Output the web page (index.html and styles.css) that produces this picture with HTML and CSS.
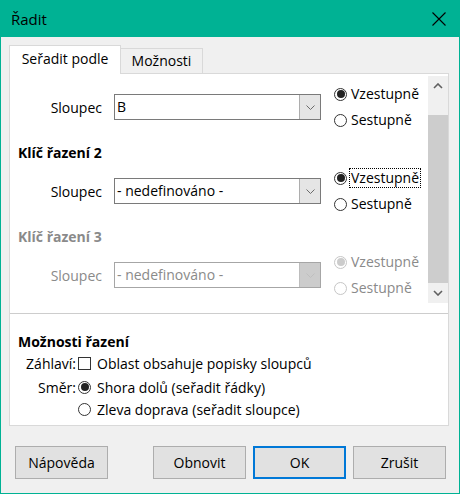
FILE: index.html
```html
<!DOCTYPE html>
<html lang="cs">
<head>
<meta charset="utf-8">
<title>Řadit</title>
<link rel="stylesheet" href="styles.css">
</head>
<body>
<div class="window">
  <div class="titlebar">
    <span class="title">Řadit</span>
    <svg class="close" width="14" height="14" viewBox="0 0 14 14"><path d="M0.5 0.5 L13.5 13.5 M13.5 0.5 L0.5 13.5" stroke="#000" stroke-width="1.1" fill="none"/></svg>
  </div>
  <div class="body">
    <div class="tabs">
      <div class="tab active">Seřadit podle</div>
      <div class="tab">Možnosti</div>
    </div>
    <div class="panel">
      <div class="scrollwin">
        <div class="keys">
          <div class="row">
            <span class="label">Sloupec</span>
            <div class="combo"><span class="val">B</span><span class="dd"><svg width="9" height="5" viewBox="0 0 9 5"><path d="M0.5 0.5 L4.5 4.5 L8.5 0.5" stroke="#6b6b6b" fill="none"/></svg></span></div>
            <div class="radios">
              <div class="radio"><span class="rb on"></span><span class="rt">Vzestupně</span></div>
              <div class="radio"><span class="rb"></span><span class="rt">Sestupně</span></div>
            </div>
          </div>
          <div class="keyhead">Klíč řazení 2</div>
          <div class="row">
            <span class="label">Sloupec</span>
            <div class="combo"><span class="val">- nedefinováno -</span><span class="dd"><svg width="9" height="5" viewBox="0 0 9 5"><path d="M0.5 0.5 L4.5 4.5 L8.5 0.5" stroke="#6b6b6b" fill="none"/></svg></span></div>
            <div class="radios">
              <div class="radio"><span class="rb on"></span><span class="rt focus">Vzestupně</span></div>
              <div class="radio"><span class="rb"></span><span class="rt">Sestupně</span></div>
            </div>
          </div>
          <div class="keyhead disabled">Klíč řazení 3</div>
          <div class="row disabled">
            <span class="label">Sloupec</span>
            <div class="combo"><span class="val">- nedefinováno -</span><span class="dd"><svg width="9" height="5" viewBox="0 0 9 5"><path d="M0.5 0.5 L4.5 4.5 L8.5 0.5" stroke="#bfbfbf" fill="none"/></svg></span></div>
            <div class="radios">
              <div class="radio"><span class="rb on"></span><span class="rt">Vzestupně</span></div>
              <div class="radio"><span class="rb"></span><span class="rt">Sestupně</span></div>
            </div>
          </div>
        </div>
        <div class="scrollbar">
          <div class="sb-btn"><svg width="10" height="6" viewBox="0 0 10 6"><path d="M1 5 L5 1 L9 5" stroke="#606060" stroke-width="1.6" fill="none"/></svg></div>
          <div class="sb-track"><div class="sb-thumb"></div></div>
          <div class="sb-btn"><svg width="10" height="6" viewBox="0 0 10 6"><path d="M1 1 L5 5 L9 1" stroke="#606060" stroke-width="1.6" fill="none"/></svg></div>
        </div>
      </div>
      <div class="options">
        <div class="opthead">Možnosti řazení</div>
        <div class="opt-row">
          <span class="opt-label">Záhlaví:</span>
          <span class="cb"></span>
          <span class="opt-text">Oblast obsahuje popisky sloupců</span>
        </div>
        <div class="opt-row second">
          <span class="opt-label">Směr:</span>
          <span class="rb on"></span>
          <span class="opt-text">Shora dolů (seřadit řádky)</span>
        </div>
        <div class="opt-row">
          <span class="opt-label"></span>
          <span class="rb"></span>
          <span class="opt-text">Zleva doprava (seřadit sloupce)</span>
        </div>
      </div>
    </div>
    <div class="buttons">
      <button class="btn">Nápověda</button>
      <button class="btn push">Obnovit</button>
      <button class="btn default">OK</button>
      <button class="btn">Zrušit</button>
    </div>
  </div>
</div>
</body>
</html>
```

FILE: styles.css
```css
html, body {
  margin: 0;
  padding: 0;
  background: #f0f0f0;
}
body {
  font-family: "Open Sans", "Noto Sans", "DejaVu Sans", sans-serif;
  font-size: 14px;
  color: #000;
}
.window {
  width: 460px;
  height: 494px;
  box-sizing: border-box;
  border: 1px solid #00b294;
  border-top: none;
  background: #f0f0f0;
  display: flex;
  flex-direction: column;
}
.titlebar {
  height: 37px;
  background: #00b294;
  display: flex;
  align-items: center;
  justify-content: space-between;
  padding: 0 13px 0 10px;
  flex: none;
}
.title {
  font-size: 15px;
}
.close {
  display: block;
}
.body {
  padding: 8px 10px 0 8px;
}
.tabs {
  display: flex;
  align-items: flex-end;
  height: 28px;
}
.tab {
  height: 25px;
  box-sizing: border-box;
  border: 1px solid #d9d9d9;
  border-left: none;
  border-bottom: none;
  background: #f0f0f0;
  width: 82px;
  display: flex;
  align-items: center;
  justify-content: center;
  padding-bottom: 1px;
}
.tab.active {
  height: 29px;
  width: 112px;
  margin-bottom: -1px;
  border-left: 1px solid #d9d9d9;
  background: #fff;
  position: relative;
  z-index: 1;
  padding-bottom: 3px;
}
.panel {
  height: 353px;
  box-sizing: border-box;
  border: 1px solid #d9d9d9;
  background: #fff;
}
.scrollwin {
  height: 240px;
  box-sizing: border-box;
  border-bottom: 1px solid #cdcdcd;
  display: flex;
}
.keys {
  flex: 1;
  padding-top: 7px;
}
.row {
  display: flex;
  align-items: center;
  height: 52px;
}
.label {
  width: 92px;
  text-align: right;
  margin-right: 12px;
}
.combo {
  width: 207px;
  height: 26px;
  box-sizing: border-box;
  border: 1px solid #7a7a7a;
  display: flex;
  background: #fff;
}
.combo .val {
  flex: 1;
  padding-left: 2px;
  line-height: 23px;
}
.combo .dd {
  width: 21px;
  box-sizing: border-box;
  border-left: 1px solid #adadad;
  background: #e5e5e5;
  display: flex;
  align-items: center;
  justify-content: center;
}
.radios {
  margin-left: 13px;
  display: flex;
  flex-direction: column;
}
.radio {
  height: 26px;
  display: flex;
  align-items: center;
}
.rb {
  width: 13px;
  height: 13px;
  box-sizing: border-box;
  border: 1px solid #333;
  border-radius: 50%;
  background: #fff;
  display: flex;
  align-items: center;
  justify-content: center;
  margin-right: 3px;
  flex: none;
}
.rb.on::after {
  content: "";
  width: 8px;
  height: 8px;
  border-radius: 50%;
  background: #222;
}
.rt {
  padding: 0 1px;
  line-height: 18px;
}
.rt.focus {
  outline: 1px dotted #000;
}
.keyhead {
  padding: 10px 0 2px 8px;
  line-height: 20px;
  font-weight: bold;
}
.disabled,
.disabled .rt,
.disabled .label {
  color: #8a8a8a;
}
.row.disabled .combo {
  border-color: #a6a6a6;
}
.row.disabled .val {
  color: #8a8a8a;
}
.row.disabled .dd {
  background: #cccccc;
  border-left-color: #bdbdbd;
}
.row.disabled .rb {
  border-color: #c6c6c6;
}
.row.disabled .rb.on::after {
  background: #cccccc;
}
.scrollbar {
  width: 20px;
  margin-top: 2px;
  height: 227px;
  background: #f0f0f0;
  display: flex;
  flex-direction: column;
}
.sb-btn {
  height: 20px;
  display: flex;
  align-items: center;
  justify-content: center;
  flex: none;
}
.sb-track {
  flex: 1;
  padding-top: 19px;
  display: flex;
  flex-direction: column;
}
.sb-thumb {
  flex: 1;
  background: #cdcdcd;
}
.options {
  padding-top: 18px;
}
.opthead {
  padding-left: 8px;
  line-height: 20px;
  font-weight: bold;
}
.opt-row {
  display: flex;
  align-items: center;
  height: 22px;
}
.opt-row.second {
  margin-top: 2px;
}
.opt-label {
  width: 66px;
  text-align: right;
  margin-right: 2px;
}
.opt-row .rb {
  margin-right: 6px;
}
.cb {
  width: 13px;
  height: 13px;
  box-sizing: border-box;
  border: 1px solid #333;
  background: #fff;
  margin-right: 6px;
  flex: none;
}
.buttons {
  display: flex;
  padding: 20px 3px 0 6px;
  gap: 7px;
}
.btn {
  width: 93px;
  height: 33px;
  box-sizing: border-box;
  border: 1px solid #adadad;
  background: #e1e1e1;
  font-family: inherit;
  font-size: 14px;
  color: #000;
  padding: 0;
  margin: 0;
}
.btn.push {
  margin-left: auto;
}
.btn.default {
  border: 2px solid #0078d7;
}
```
